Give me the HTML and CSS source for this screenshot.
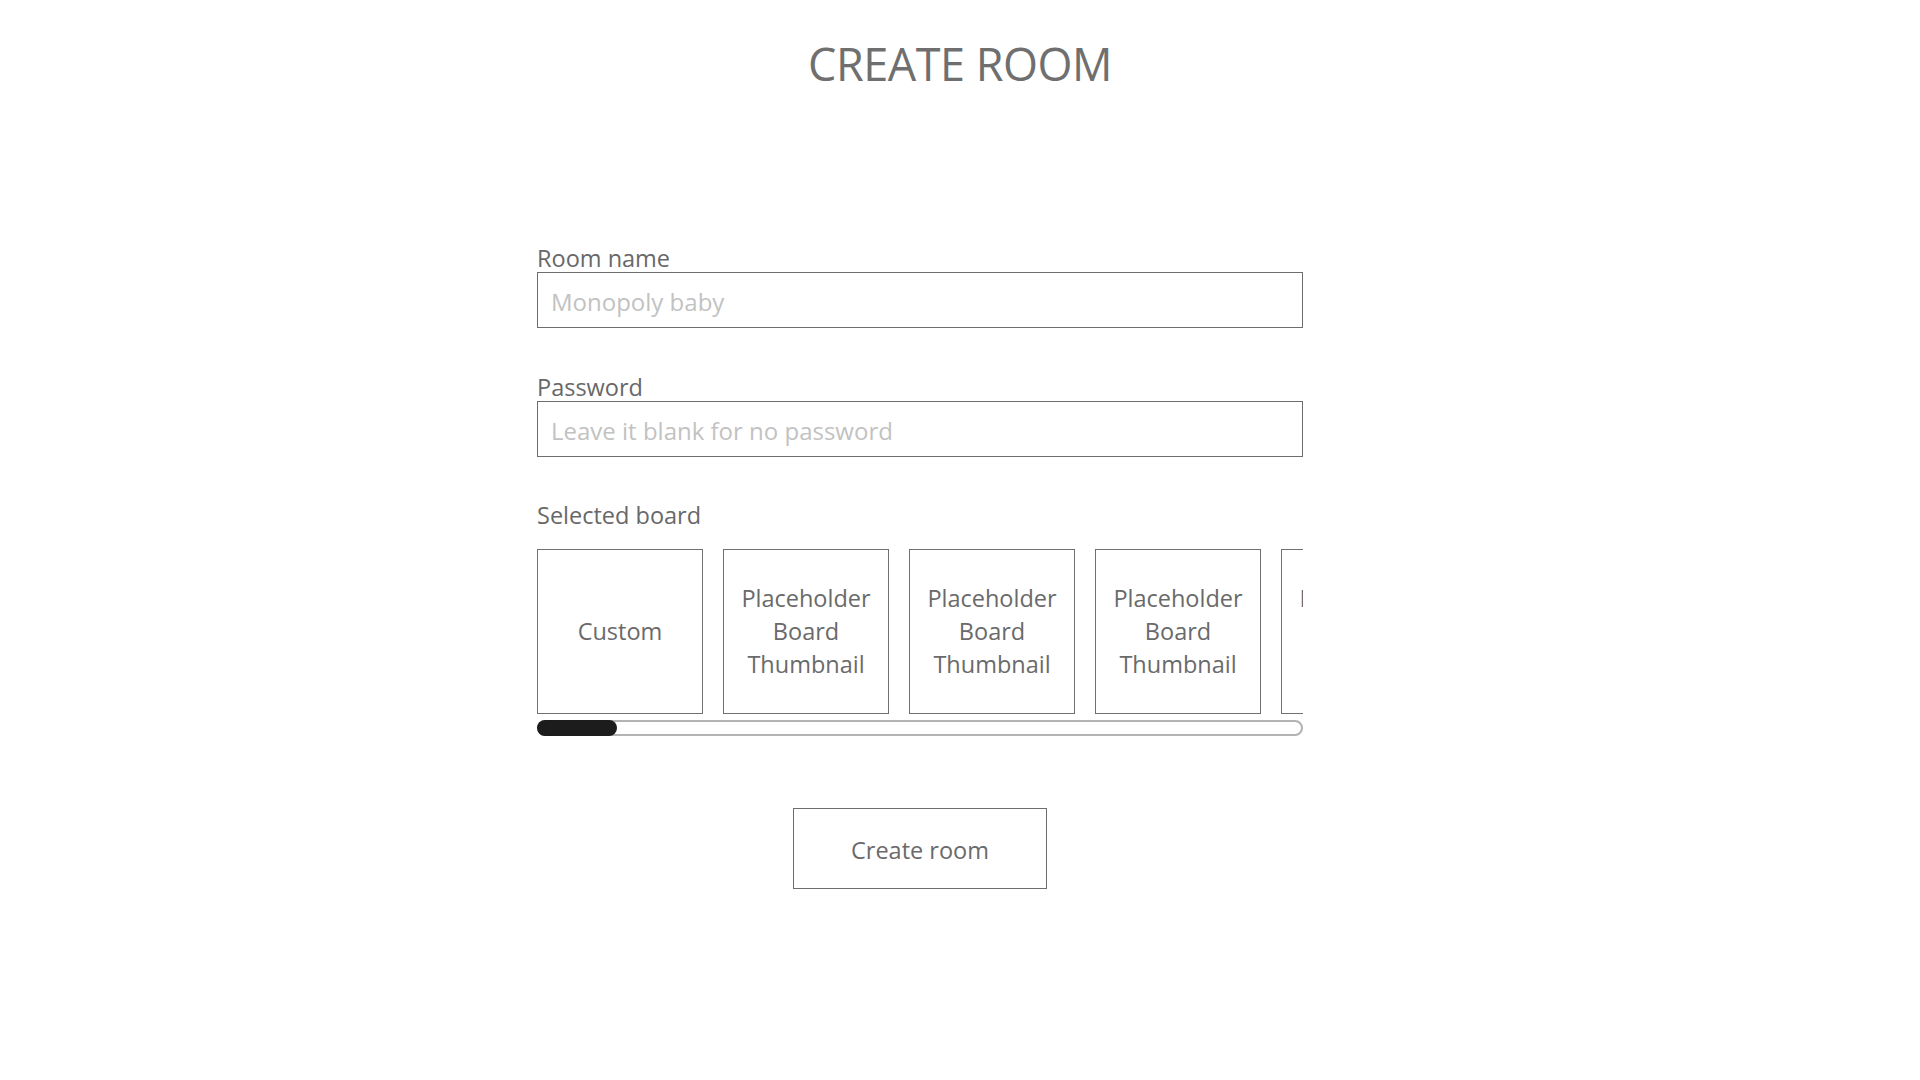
FILE: index.html
```html
<!DOCTYPE html>
<html lang="en">
<head>
<meta charset="utf-8">
<title>Create Room</title>
<link rel="stylesheet" href="styles.css">
</head>
<body>
<main class="page">
  <h1 class="title">CREATE ROOM</h1>
  <form class="form">
    <label class="field">
      <span class="label">Room name</span>
      <input class="input" type="text" placeholder="Monopoly baby">
    </label>
    <label class="field">
      <span class="label">Password</span>
      <input class="input" type="password" placeholder="Leave it blank for no password">
    </label>
    <div class="field boards-field">
      <span class="label">Selected board</span>
      <div class="boards">
        <div class="board">Custom</div>
        <div class="board">Placeholder Board Thumbnail</div>
        <div class="board">Placeholder Board Thumbnail</div>
        <div class="board">Placeholder Board Thumbnail</div>
        <div class="board">Placeholder Board Thumbnail</div>
        <div class="board">Placeholder Board Thumbnail</div>
      </div>
      <div class="scrollbar"><div class="thumb" style="width: 80px"></div></div>
    </div>
    <div class="actions">
      <button class="button" type="button">Create room</button>
    </div>
  </form>
</main>
</body>
</html>
```
FILE: styles.css
```css
* { box-sizing: border-box; }
html, body { margin: 0; padding: 0; background: #ffffff; }
body {
  font-family: "Open Sans", "Noto Sans", sans-serif;
  color: #6a6a6a;
}
.page {
  padding-top: 36px;
}
.title {
  margin: 0;
  text-align: center;
  font-size: 45px;
  line-height: 56px;
  font-weight: 400;
  color: #6f6f6f;
  letter-spacing: -0.5px;
}
.form {
  width: 766px;
  margin: 152px 0 0 calc(50% - 423px);
  display: flex;
  flex-direction: column;
}
.field {
  display: flex;
  flex-direction: column;
}
.field + .field { margin-top: 45px; }
.boards-field { margin-top: 44px !important; }
.label {
  font-size: 23.5px;
  line-height: 28px;
  color: #686868;
}
.input {
  height: 56px;
  width: 100%;
  border: 1px solid #6e6e6e;
  padding: 2px 13px 0;
  font-family: inherit;
  font-size: 24px;
  color: #555;
  background: #fff;
  outline: none;
}
.input::placeholder { color: #c2c2c2; }
.boards {
  margin-top: 20px;
  display: flex;
  gap: 20px;
  overflow: hidden;
}
.board {
  flex: 0 0 166px;
  height: 165px;
  border: 1px solid #707070;
  display: flex;
  align-items: center;
  justify-content: center;
  text-align: center;
  font-size: 23.5px;
  line-height: 33px;
  color: #6a6a6a;
  padding: 0 8px;
}
.scrollbar {
  margin-top: 6px;
  height: 16px;
  border: 2px solid #b3b3b3;
  border-radius: 8px;
  position: relative;
}
.thumb {
  position: absolute;
  left: -2px;
  top: -2px;
  height: 16px;
  background: #1c1c1c;
  border-radius: 8px;
}
.actions {
  margin-top: 72px;
  display: flex;
  justify-content: center;
}
.button {
  width: 254px;
  height: 81px;
  border: 1px solid #6e6e6e;
  background: #fff;
  font-family: inherit;
  font-size: 23.5px;
  color: #6a6a6a;
  padding: 2px 0 0;
}
```
